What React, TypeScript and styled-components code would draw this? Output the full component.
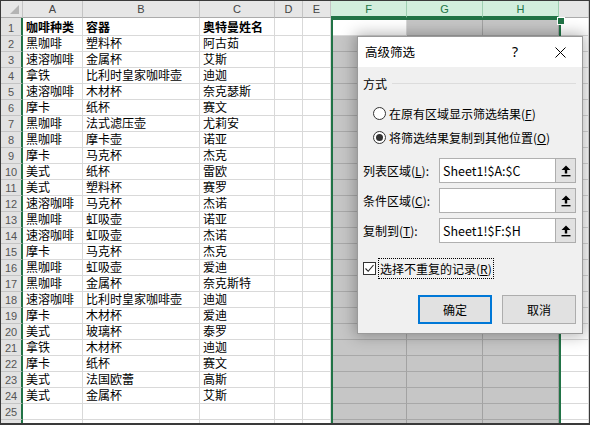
import React from "react";
import styled, { createGlobalStyle, css } from "styled-components";

const GlobalStyle = createGlobalStyle`
  html, body { margin: 0; padding: 0; background: #ffffff; overflow: hidden; }
  * { box-sizing: border-box; }
`;

const GREEN = "#217346";
const COLS = [22, 60, 117, 75, 28, 28, 76, 76, 76];
const LETTERS = ["", "A", "B", "C", "D", "E", "F", "G", "H", ""];

const DATA: string[][] = [
  ["咖啡种类", "容器", "奥特曼姓名"],
  ["黑咖啡", "塑料杯", "阿古茹"],
  ["速溶咖啡", "金属杯", "艾斯"],
  ["拿铁", "比利时皇家咖啡壶", "迪迦"],
  ["速溶咖啡", "木材杯", "奈克瑟斯"],
  ["摩卡", "纸杯", "赛文"],
  ["黑咖啡", "法式滤压壶", "尤莉安"],
  ["黑咖啡", "摩卡壶", "诺亚"],
  ["摩卡", "马克杯", "杰克"],
  ["美式", "纸杯", "雷欧"],
  ["美式", "塑料杯", "赛罗"],
  ["速溶咖啡", "马克杯", "杰诺"],
  ["黑咖啡", "虹吸壶", "诺亚"],
  ["速溶咖啡", "虹吸壶", "杰诺"],
  ["摩卡", "马克杯", "杰克"],
  ["黑咖啡", "虹吸壶", "爱迪"],
  ["黑咖啡", "金属杯", "奈克斯特"],
  ["速溶咖啡", "比利时皇家咖啡壶", "迪迦"],
  ["摩卡", "木材杯", "爱迪"],
  ["美式", "玻璃杯", "泰罗"],
  ["拿铁", "木材杯", "迪迦"],
  ["摩卡", "纸杯", "赛文"],
  ["美式", "法国欧蕾", "高斯"],
  ["美式", "金属杯", "艾斯"],
  ["", "", ""],
  ["", "", ""],
];

const Frame = styled.div`
  position: relative;
  width: 590px;
  height: 425px;
  border: 1px solid #3a3a3a;
  border-bottom-width: 2px;
  overflow: hidden;
  background: #fff;
`;

const Sheet = styled.div`
  display: grid;
  grid-template-columns: ${COLS.map((c) => c + "px").join(" ")} 1fr;
  grid-template-rows: 17px 18px repeat(25, 16px);
  font-family: "Noto Sans CJK SC", sans-serif;
  font-size: 12px;
  color: #000;
`;

const Corner = styled.div`
  position: relative;
  background: #e6e6e6;
  border-right: 1px solid #c4c4c4;
  border-bottom: 1px solid #ababab;
  &::after {
    content: "";
    position: absolute;
    right: 3px;
    bottom: 3px;
    width: 0;
    height: 0;
    border-left: 9px solid transparent;
    border-bottom: 9px solid #b4b4b4;
  }
`;

const ColHead = styled.div<{ $hl?: boolean }>`
  display: flex;
  align-items: center;
  justify-content: center;
  font-family: "Liberation Sans", Arial, sans-serif;
  font-size: 11px;
  color: #444;
  background: #e6e6e6;
  border-right: 1px solid #c4c4c4;
  border-bottom: 1px solid #ababab;
  ${(p) =>
    p.$hl &&
    css`
      background: #d2eedd;
      color: ${GREEN};
      border-right-color: #9fcfb2;
      border-bottom: 2px solid ${GREEN};
    `}
`;

const RowHead = styled.div`
  display: flex;
  align-items: flex-end;
  justify-content: center;
  padding-bottom: 1px;
  font-family: "Liberation Sans", Arial, sans-serif;
  font-size: 11px;
  color: #555;
  background: #e2e2e2;
  border-right: 2px solid ${GREEN};
  border-bottom: 1px solid #c4c4c4;
`;

const Cell = styled.div<{ $sel?: boolean; $bold?: boolean }>`
  display: flex;
  align-items: flex-end;
  padding: 0 0 1px 3px;
  white-space: nowrap;
  overflow: visible;
  line-height: 14px;
  font-weight: ${(p) => (p.$bold ? 700 : 400)};
  background: ${(p) => (p.$sel ? "#c6c6c6" : "#fff")};
  border-right: 1px solid ${(p) => (p.$sel ? "#a2a2a2" : "#d9d9d9")};
  border-bottom: 1px solid ${(p) => (p.$sel ? "#a8a8a8" : "#d9d9d9")};
`;

const SelectionBox = styled.div`
  position: absolute;
  left: 330px;
  top: 17px;
  width: 230px;
  height: 500px;
  border: 2px solid ${GREEN};
  pointer-events: none;
`;

const FillHandle = styled.div`
  position: absolute;
  left: 556px;
  top: 16px;
  width: 6px;
  height: 6px;
  background: ${GREEN};
  border: 1px solid #fff;
  box-sizing: content-box;
`;

/* ---------- Dialog ---------- */

const Dialog = styled.div`
  position: absolute;
  left: 356px;
  top: 35px;
  width: 226px;
  height: 298px;
  display: flex;
  flex-direction: column;
  background: #f0f0f0;
  border: 1px solid #9a9a9a;
  box-shadow: 0 0 14px 2px rgba(0, 0, 0, 0.3);
  font-family: "Noto Sans CJK SC", sans-serif;
  font-size: 12px;
  color: #000;
`;

const TitleBar = styled.div`
  height: 30px;
  display: flex;
  align-items: center;
  padding: 0 10px 0 7px;
  background: #fff;
  font-size: 12.5px;
`;

const TitleText = styled.span`
  line-height: 1;
`;

const HelpBtn = styled.div`
  margin-left: auto;
  width: 20px;
  text-align: center;
  font-family: "Noto Sans", sans-serif;
  font-size: 14px;
  line-height: 1;
`;

const CloseBtn = styled.div`
  margin-left: 23px;
  width: 24px;
  display: flex;
  justify-content: center;
`;

const Body = styled.div`
  flex: 1;
  display: flex;
  flex-direction: column;
  padding: 8px 6px 9px 5px;
`;

const GroupHead = styled.div`
  height: 16px;
  display: flex;
  align-items: center;
  &::after {
    content: "";
    flex: 1;
    margin-left: 5px;
    border-top: 1px solid #dcdcdc;
  }
`;

const RadioList = styled.div`
  margin-top: 12px;
  padding-left: 10px;
  display: flex;
  flex-direction: column;
  gap: 4px;
`;

const RadioRow = styled.div`
  height: 20px;
  display: flex;
  align-items: center;
  white-space: nowrap;
`;

const RadioDot = styled.span<{ $on?: boolean }>`
  width: 13px;
  height: 13px;
  margin-right: 3px;
  border-radius: 50%;
  border: 1px solid #333;
  background: #fff;
  display: flex;
  align-items: center;
  justify-content: center;
  &::after {
    content: "";
    width: 7px;
    height: 7px;
    border-radius: 50%;
    background: ${(p) => (p.$on ? "#333" : "transparent")};
  }
`;

const U = styled.span`
  text-decoration: underline;
  text-underline-offset: 1px;
`;

const Fields = styled.div`
  margin-top: 11px;
  display: flex;
  flex-direction: column;
  gap: 5px;
`;

const FieldRow = styled.div`
  height: 25px;
  display: grid;
  grid-template-columns: 76px 1fr 21px;
  align-items: stretch;
`;

const FieldLabel = styled.div`
  display: flex;
  align-items: center;
  white-space: nowrap;
`;

const FieldInput = styled.div`
  display: flex;
  align-items: center;
  padding-left: 3px;
  background: #fff;
  border: 1px solid #b0b0b0;
  border-right: none;
  font-size: 12.5px;
`;

const PickBtn = styled.div`
  display: flex;
  align-items: center;
  justify-content: center;
  background: #e1e1e1;
  border: 1px solid #adadad;
`;

const CheckRow = styled.div`
  margin-top: 15px;
  height: 21px;
  display: flex;
  align-items: center;
`;

const CheckBox = styled.span`
  width: 13px;
  height: 13px;
  border: 1px solid #333;
  background: #fff;
  display: flex;
  align-items: center;
  justify-content: center;
`;

const CheckLabel = styled.span`
  margin-left: 2px;
  height: 21px;
  padding: 0 1px;
  display: flex;
  align-items: center;
  border: 1px dotted #000;
  white-space: nowrap;
`;

const Buttons = styled.div`
  margin-top: 16px;
  display: flex;
  justify-content: flex-end;
  gap: 10px;
`;

const Button = styled.div<{ $primary?: boolean }>`
  width: 74px;
  height: 29px;
  display: flex;
  align-items: center;
  justify-content: center;
  background: #e1e1e1;
  border: ${(p) => (p.$primary ? "2px solid #0078d7" : "1px solid #adadad")};
`;

const UpArrow = () => (
  <svg width="10" height="12" viewBox="0 0 10 12">
    <path d="M5 0.5 L9.5 5 L6.2 5 L6.2 8.5 L3.8 8.5 L3.8 5 L0.5 5 Z" fill="#000" />
    <rect x="0.5" y="10" width="9" height="1.4" fill="#000" />
  </svg>
);

const CloseIcon = () => (
  <svg width="11" height="11" viewBox="0 0 11 11">
    <path d="M0.5 0.5 L10.5 10.5 M10.5 0.5 L0.5 10.5" stroke="#000" strokeWidth="1" />
  </svg>
);

const CheckMark = () => (
  <svg width="11" height="11" viewBox="0 0 11 11">
    <path d="M1.5 5.5 L4.2 8.3 L9.5 2" fill="none" stroke="#222" strokeWidth="1.1" />
  </svg>
);

export default function App() {
  return (
    <>
      <GlobalStyle />
      <Frame>
        <Sheet>
          <Corner />
          {LETTERS.slice(1).map((l, i) => (
            <ColHead key={i} $hl={i >= 5 && i <= 7}>
              {l}
            </ColHead>
          ))}
          {DATA.map((row, r) => (
            <React.Fragment key={r}>
              <RowHead>{r < 25 ? r + 1 : ""}</RowHead>
              {[0, 1, 2].map((c) => (
                <Cell key={c} $bold={r === 0}>
                  {row[c]}
                </Cell>
              ))}
              <Cell />
              <Cell />
              <Cell $sel={r !== 0} />
              <Cell $sel />
              <Cell $sel />
              <Cell />
            </React.Fragment>
          ))}
        </Sheet>
        <SelectionBox />
        <FillHandle />
        <Dialog>
          <TitleBar>
            <TitleText>高级筛选</TitleText>
            <HelpBtn>?</HelpBtn>
            <CloseBtn>
              <CloseIcon />
            </CloseBtn>
          </TitleBar>
          <Body>
            <GroupHead>方式</GroupHead>
            <RadioList>
              <RadioRow>
                <RadioDot />
                在原有区域显示筛选结果(<U>F</U>)
              </RadioRow>
              <RadioRow>
                <RadioDot $on />
                将筛选结果复制到其他位置(<U>O</U>)
              </RadioRow>
            </RadioList>
            <Fields>
              <FieldRow>
                <FieldLabel>
                  列表区域(<U>L</U>):
                </FieldLabel>
                <FieldInput>Sheet1!$A:$C</FieldInput>
                <PickBtn>
                  <UpArrow />
                </PickBtn>
              </FieldRow>
              <FieldRow>
                <FieldLabel>
                  条件区域(<U>C</U>):
                </FieldLabel>
                <FieldInput />
                <PickBtn>
                  <UpArrow />
                </PickBtn>
              </FieldRow>
              <FieldRow>
                <FieldLabel>
                  复制到(<U>T</U>):
                </FieldLabel>
                <FieldInput>Sheet1!$F:$H</FieldInput>
                <PickBtn>
                  <UpArrow />
                </PickBtn>
              </FieldRow>
            </Fields>
            <CheckRow>
              <CheckBox>
                <CheckMark />
              </CheckBox>
              <CheckLabel>
                选择不重复的记录(<U>R</U>)
              </CheckLabel>
            </CheckRow>
            <Buttons>
              <Button $primary>确定</Button>
              <Button>取消</Button>
            </Buttons>
          </Body>
        </Dialog>
      </Frame>
    </>
  );
}
